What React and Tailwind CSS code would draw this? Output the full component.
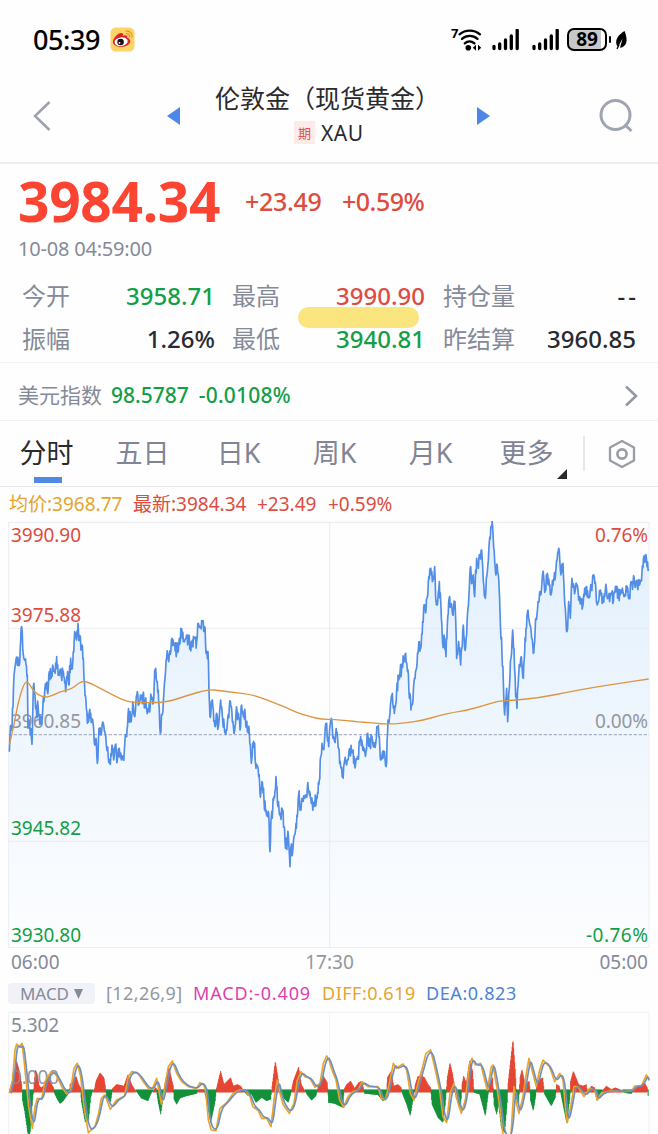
import React from "react";

const shift = (dx, dy, text) =>
  text.split(" ").map((p) => {
    const [x, y] = p.split(",").map(Number);
    return [x + dx, y + dy];
  });

const price = [
  ...shift(0, 1545, "28,710 30,660 36,640 42,480 48,435 58,450 62,380 65,335 70,420 78,450 82,480 84,640 88,625 96,688 100,515 105,540 110,600 114,570 118,600 124,628 130,545 138,510 142,530 148,470 153,490 158,450 164,470 170,425 176,480 184,485 190,470 197,530 203,470 206,510 212,430 217,460 224,350 230,375 234,325 238,375 246,390 250,430 252,490 258,560 262,625 268,590 275,610 284,690 288,670 292,745 297,640 302,660 310,625 316,660 320,700 331,748 336,690 341,735 346,690 352,735 358,700 364,735 370,735 376,660 380,665 384,600 392,615 400,575 406,590 412,530 418,565 426,540 436,565 446,590 454,545 460,565 463,500 467,460 472,500 476,560 481,655 486,600 490,560 495,490 500,430 508,415 516,370 524,385 530,415 538,370 544,360 550,380 558,370 566,380 574,390 582,370 590,380 595,325 600,335"),
  ...shift(600, 1830, "2,50 14,50 18,130 24,125 28,270 30,320 34,275 40,300 46,350 50,310 55,350 62,270 68,330 76,370 82,340 88,290 94,290 102,370 108,310 114,310 120,360 125,285 130,320 136,320 142,365 148,370 154,460 158,400 164,400 168,475 176,500 180,550 186,515 192,570 198,600 206,610 210,725 214,620 218,600 222,560 228,500 234,590 240,610 248,600 252,650 258,710 262,690 265,675 270,770 273,710 277,735 282,680 288,640 292,620 296,555 303,600 308,570 316,555 322,535 328,555 334,580 343,585 350,560 354,550 358,510 362,440 366,400 370,415 376,350 380,340 386,410 391,340 397,355 402,385 410,370 416,415 422,470 428,495 434,450 440,465 450,425 458,425 464,465 474,445 482,380 490,410 498,425 503,370 509,410 516,380 524,410 532,355 538,380 542,450 552,430 560,455 564,330 570,310 577,250 583,310 590,240 597,200 605,175 617,130 624,180 628,265 636,285 642,215 648,180 654,130"),
  ...shift(1140, 1545, "118,380 122,400 128,320 134,270 138,285 145,200 151,160 157,200 164,155 168,260 172,270 178,200 184,310 188,385 192,360 198,425 202,330 206,260 212,270 218,300 225,260 230,430 236,380 242,450 250,330 254,400 260,360 264,280 268,220 272,155 276,200 280,180 284,245 290,130 295,160 300,130 305,105 310,200 316,250 322,170 328,80 335,38 338,38 344,140 348,180 352,155 356,190 360,290 366,420 370,500 374,600 380,520 383,620 388,520 393,430 398,345 402,400 407,545 411,580 416,480 424,425 430,490 434,410 438,340 444,285 450,330 455,370 460,415 464,380 468,310 474,260 482,240 488,175 496,220 502,175 508,210 514,235 522,190 528,160 533,115 538,110 543,180 549,145 552,210 556,280 561,350 566,260 571,310 576,190 582,215 590,210 596,255 602,250 608,275 614,220 620,215 626,245 634,210 643,185 648,230 652,270 660,235 668,260 676,225 684,245 692,235 700,260 708,230 716,240 724,225 732,245 740,230 748,240 756,200 764,205 772,215 780,205 786,170 796,120 801,155 806,162"),
];

const average = [
  ...shift(0, 1545, "28,690 40,640 55,560 72,505 85,500 100,530 130,548 155,543 180,530 215,522 235,505 250,498 270,504 320,530 380,561 430,563 500,562 560,542"),
  ...shift(600, 1830, "25,238 60,242 100,247 150,253 180,262 220,278 260,293 290,308 330,320 365,328 400,328 480,336 530,340"),
  ...shift(1140, 1545, "0,626 40,627 80,623 125,617 180,601 220,592 260,586 310,572 355,558 400,556 480,548 560,532 640,517 720,505 806,492"),
];

const diff = [
  ...shift(0, 2700, "28,580 38,540 45,450 50,432 58,440 66,430 72,480 78,540 86,620 97,685 105,620 112,595 125,598 135,545 150,520 160,515 172,530 185,560 200,582 212,570 222,505 232,490 242,530 252,620 265,698 285,680 296,640 304,595 315,585 331,628 350,600 374,588 385,530 395,515 412,518 430,545 445,565 458,565 470,535 484,612 492,575 505,500 517,483 530,520 545,545 565,560 590,565 600,548 612,555 618,580 625,660 634,690 648,692 660,625 680,608 700,580 718,570 735,570 750,590 758,620 775,632 785,655 800,655 813,680 822,600 832,540 840,580 850,615 868,640 882,610 892,540 903,515 915,530 930,535 945,562 960,550 970,490 980,468"),
  ...shift(984, 2700, "4,482 12,510 24,540 35,600 47,622 60,590 75,575 90,570 102,545 120,560 150,560 160,595 172,600 182,560 196,490 205,505 225,492 236,510 247,580 258,600 270,550 284,500 294,460 308,450 320,500 335,570 345,650 356,668 366,580 378,550 390,610 400,640 412,600 425,490 432,475 442,495 458,490 470,540 478,570 490,500 495,495 508,570 518,640 525,705 548,720 558,560 565,610 573,640 585,590 595,520 603,475 612,510 625,560 635,510 645,480 665,500 680,545 695,520 705,540 712,620 718,668 728,620 738,560 750,560 768,590 785,565 800,570 808,600 820,580 850,572 890,575 912,572 920,558 940,558 955,525 963,540"),
];

// x, height above the zero line
const histogram = [
  ...shift(0, 0, "28,0 40,40 50,90 58,60 66,15 68,-30 74,-60 84,-130 90,-130 96,-50 100,-5 103,30 106,65 112,50 118,15 124,10 135,20 145,50 155,20 162,8 164,-8 172,-25 180,-38 190,-30 200,-15 208,-5 210,20 220,30 228,45 236,20 242,10 244,-30 256,-95 266,-85 272,-20 276,-5 284,8 288,30 300,55 312,40 316,15 320,-20 332,-32 338,8 350,20 360,18 372,15 384,50 395,20 404,5 412,-5 424,-22 444,-30 452,-10 462,5 468,12 474,-30 482,-70 488,-30 494,20 506,75 514,40 520,15 522,-25 530,-40 540,-22 560,-15 590,-8 596,5 612,5 620,-30 632,-95 645,-35 650,10 662,60 672,20 682,30 692,40 700,15 712,20 722,15 730,2 735,-5 745,-15 755,-10 768,-35 785,-20 800,-30 812,-25 817,20 826,90 834,40 840,-5 850,-20 865,-35 872,-10 880,30 896,72 904,20 912,5 922,-12 935,-28 948,-15 955,15 970,45 982,25"),
  ...shift(984, 0, "2,-35 20,-38 45,-50 48,5 56,20 68,30 80,8 92,25 100,30 105,15 110,-8 130,-10 150,-12 165,-30 176,-20 178,40 190,60 197,15 210,20 220,10 224,-10 236,-40 247,-75 256,-20 262,20 270,45 282,45 290,40 300,20 308,10 312,-40 330,-80 345,-95 352,-40 358,40 366,85 374,50 380,10 384,-20 398,-50 402,20 407,45 415,25 425,90 434,60 438,-5 455,-10 463,-40 472,-75 480,-15 484,20 494,40 498,-40 506,-70 512,-40 520,-110 530,-125 538,-30 540,20 550,110 555,155 562,60 566,-25 572,-40 576,40 582,65 592,20 604,30 608,-30 616,-60 624,-10 626,30 644,40 650,-10 670,-45 682,-20 686,20 694,15 700,-15 716,-95 726,-20 728,30 736,60 744,40 752,20 765,15 775,20 778,-10 790,15 800,10 806,-28 815,-10 835,15 850,5 862,10 880,3 890,-6 910,-8 925,10 950,25 958,10 961,-20"),
];

// small tick noise between the stored points, always the same
function withTicks(points, amount) {
  let seed = 11;
  const rand = () => {
    seed = (seed * 16807) % 2147483647;
    return seed / 2147483647 - 0.5;
  };
  const out = [];
  points.forEach(([x, y], i) => {
    out.push([x, y]);
    const next = points[i + 1];
    if (!next) return;
    const steps = Math.max(1, Math.round((next[0] - x) / 1.5));
    for (let s = 1; s < steps; s++) {
      const t = s / steps;
      out.push([x + (next[0] - x) * t, y + (next[1] - y) * t + rand() * amount]);
    }
  });
  return out;
}

const toPath = (points) => "M" + points.map(([x, y]) => `${x.toFixed(1)} ${y.toFixed(1)}`).join("L");

function smoothPath(points) {
  let d = `M${points[0][0]} ${points[0][1]}`;
  for (let i = 1; i < points.length - 1; i++) {
    const [x, y] = points[i];
    const [nx, ny] = points[i + 1];
    d += `Q${x} ${y} ${(x + nx) / 2} ${(y + ny) / 2}`;
  }
  const last = points[points.length - 1];
  return d + `L${last[0]} ${last[1]}`;
}

const ZERO = 3273;

function barPath(positive) {
  let d = "";
  for (let x = 29; x < 1946; x += 1.5) {
    const i = histogram.findIndex((p) => p[0] > x);
    if (i < 1) continue;
    const [x0, h0] = histogram[i - 1];
    const [x1, h1] = histogram[i];
    const h = h0 + ((h1 - h0) * (x - x0)) / (x1 - x0);
    if (h > 0 === positive) d += `M${x} ${positive ? ZERO + 4 : ZERO - 4}V${(ZERO - h).toFixed(1)}`;
  }
  return d;
}

const pricePath = toPath(withTicks(price, 46));
const dea = diff.map(([x, y]) => [Math.min(x + 5, 1947), ZERO + (y - ZERO) * 0.97]);

const quotes = [
  ["今开", "3958.71", "text-[#129f46]", "最高", "3990.90", "text-[#dc4d40]", "持仓量", "--", "text-[#292a2e] tracking-[3px] -mr-[3px]"],
  ["振幅", "1.26%", "text-[#292a2e]", "最低", "3940.81", "text-[#129f46]", "昨结算", "3960.85", "text-[#292a2e]"],
];

const tabs = ["分时", "五日", "日K", "周K", "月K", "更多"];

function WeiboIcon() {
  return (
    <svg width="25" height="25" viewBox="0 0 26 26">
      <rect x="0.5" y="0.5" width="25" height="25" rx="5.5" fill="#fcd567" />
      <path d="M3 15.5C3 11.5 8.5 6 12 6.3c1.6.2 1.8 1.5 1.4 2.8 2.3-1 5.2-.8 4.4 2 2.2.6 3.7 2 3.2 4.3-.7 3.3-4.600 5.200-9.100 5.200C7 20.600 3 18.600 3 15.500z" fill="#e0232a" />
      <ellipse cx="11.600" cy="15.300" rx="6.900" ry="4.500" fill="#fff" transform="rotate(-8 11.600 15.300)" />
      <circle cx="11" cy="15.600" r="3.400" fill="#15100f" />
      <circle cx="9.900" cy="16.500" r="1" fill="#fff" />
      <path d="M17.300 7c1.800-.3 3.500 1.200 3 3.200M16.800 4.200c3.600-.6 6.900 2.300 6.200 6.400" fill="none" stroke="#f29a26" strokeWidth="1.500" strokeLinecap="round" />
    </svg>
  );
}

function WifiIcon() {
  return (
    <svg width="32" height="28" viewBox="0 -2 32 28" className="overflow-visible">
      <text x="-1" y="9.500" fontSize="13" fontWeight="700" fill="#000">7</text>
      <g fill="none" stroke="#000" strokeWidth="2.300" strokeLinecap="round">
        <path d="M7.500 6.300C13.500 1.300 22 1.300 28 6.300" />
        <path d="M10 10.900c4.500-4 11-4 15.500 0" />
        <path d="M12.800 15.400c2.900-2.600 6.700-2.600 9.600 0" />
      </g>
      <circle cx="16.300" cy="19.700" r="2.800" fill="#000" />
      <path d="M24 16.700v6l-3.200-3zM26 16.700v6l3.200-3z" fill="#000" />
    </svg>
  );
}

function SignalIcon() {
  return (
    <svg width="28" height="22" viewBox="0 0 28 22">
      <path d="M2 17.500v2M7.700 15v4.500M13.500 11v8.500M19.300 7v12.500M25.200 1.200v18.300" stroke="#000" strokeWidth="3.300" strokeLinecap="round" />
    </svg>
  );
}

function StatusBar() {
  return (
    <div className="flex h-[79px] items-center pl-[33px] pr-[30px] text-black">
      <span className="w-[69px] text-[27px] font-medium leading-none tracking-[-0.400px]">05:39</span>
      <div className="ml-2"><WeiboIcon /></div>
      <div className="ml-auto flex items-center">
        <WifiIcon />
        <div className="ml-[8px]"><SignalIcon /></div>
        <div className="ml-3"><SignalIcon /></div>
        <div className="ml-[7px] flex h-[23px] w-10 items-center justify-center rounded-[7px] border-2 border-black bg-gradient-to-r from-[#c8c8c8] from-89% to-white to-90% text-[19px] font-bold leading-none">
          89
        </div>
        <div className="ml-[2px] h-[7px] w-[2px] rounded-full bg-black" />
        <svg className="ml-1" width="13" height="20" viewBox="0 0 13 20">
          <path d="M9.500 1C4 4.500 1 8 1.200 12.800c.1 1.900.9 3.200 1.800 4.200L7.600 8.500 5 17.800c4.500-.5 6.500-4 6.600-7.800C11.600 6.500 10.600 3.500 9.500 1z" fill="#000" />
          <path d="M2 19l2.200-4.500" stroke="#000" strokeWidth="1.300" />
        </svg>
      </div>
    </div>
  );
}

function Header() {
  return (
    <div className="flex h-[85px] items-center border-b-2 border-[#eeeeee] pl-[33px] pb-[11px] pt-[1px]">
      <svg width="18" height="32" viewBox="0 0 18 32">
        <path d="M16.500 2L2 16l14.500 14" fill="none" stroke="#9da2b0" strokeWidth="2.500" />
      </svg>
      <svg className="ml-[115px]" width="14" height="20" viewBox="0 0 14 20"><path d="M14 1v18L1 10z" fill="#4d88e8" /></svg>
      <div className="ml-[35px] w-[226px] text-[#292a2e]">
        <div className="text-[25px] leading-[34px] whitespace-nowrap">伦敦金（现货黄金）</div>
        <div className="flex items-center gap-[6px] pl-[79px] text-[21px] leading-[36px]">
          <span className="flex h-[23px] w-[21px] items-center justify-center bg-[#fdebe9] text-[13px] text-[#dc5549]">期</span>
          <span className="tracking-[0.500px]">XAU</span>
        </div>
      </div>
      <svg className="ml-[36px]" width="14" height="20" viewBox="0 0 14 20"><path d="M0 1v18l13-9z" fill="#4d88e8" /></svg>
      <svg className="ml-[108px]" width="36" height="36" viewBox="0 0 36 36" fill="none" stroke="#a0a5b3" strokeWidth="3">
        <circle cx="16.500" cy="17" r="14.500" />
        <path d="M25.500 26.500l7 6.500" />
      </svg>
    </div>
  );
}

function Quote() {
  return (
    <div className="h-[199px] border-b border-[#f3f3f3] pt-[8px]">
      <div className="flex h-[60px] items-center pl-[18px] text-[25px] text-[#dc4d40] font-medium">
        <span className="w-[227px] pb-[4px] text-[55px] font-bold leading-none text-[#fb4432] tracking-[-0.300px]">3984.34</span>
        <span className="w-[97px] tracking-[-0.300px]">+23.49</span>
        <span className="tracking-[-0.500px]">+0.59%</span>
      </div>
      <div className="flex h-[34px] items-center pl-[18px] text-[20px] leading-none tracking-[-0.200px] text-[#858a99]">10-08 04:59:00</div>
      <div className="relative">
        <div className="absolute left-[298px] top-[41px] h-[21px] w-[121px] rounded-full bg-[#fbe57f]" />
        <div className="relative pt-[8px]">
          {quotes.map((q) => (
            <div key={q[0]} className="grid h-[43px] grid-cols-[210px_211px_193px] items-center pl-[22px] text-[24px] text-[#858a99]">
              {[0, 3, 6].map((i) => (
                <div key={i} className={i === 0 ? "flex justify-between pr-[17px]" : i === 3 ? "flex justify-between pr-[18px]" : "flex justify-between"}>
                  <span>{q[i]}</span>
                  <span className={`font-medium ${q[i + 2]}`}>{q[i + 1]}</span>
                </div>
              ))}
            </div>
          ))}
        </div>
      </div>
    </div>
  );
}

function DollarIndex() {
  return (
    <div className="flex h-[58px] items-center border-b border-[#f1f1f1] pl-[18px] pr-[20px] pt-2 text-[21px] text-[#858a99]">
      <span>美元指数</span>
      <span className="ml-[9px] font-medium text-[#129f46]">98.5787</span>
      <span className="ml-[10px] font-medium tracking-[0.200px] text-[#129f46]">-0.0108%</span>
      <svg className="ml-auto" width="14" height="22" viewBox="0 0 14 22">
        <path d="M2 1.500L12 11 2 20.500" fill="none" stroke="#9297a3" strokeWidth="2.500" />
      </svg>
    </div>
  );
}

function Tabs() {
  return (
    <div className="flex h-[66px] items-center border-b border-[#e9e9eb] text-[27px] text-[#7f8595]">
      {tabs.map((tab, i) => (
        <div key={tab} className={`relative flex h-full w-24 items-center justify-center pr-[3px] ${i === 0 ? "text-[#292a2e]" : ""}`}>
          {tab}
          {i === 0 && <div className="absolute bottom-[3px] left-[34px] h-[6px] w-[28px] bg-[#5289e2]" />}
          {i === 5 && (
            <svg className="absolute bottom-[7px] right-[9px]" width="10" height="10" viewBox="0 0 10 10"><path d="M10 0v10H0z" fill="#292a2e" /></svg>
          )}
        </div>
      ))}
      <div className="ml-[7px] h-[35px] w-[2px] bg-[#e6e7ea]" />
      <svg className="ml-[23px]" width="28" height="30" viewBox="0 0 28 30" fill="none" stroke="#989da9" strokeWidth="2.300">
        <path d="M14 2l12 6.500v13L14 28 2 21.500v-13z" strokeLinejoin="round" />
        <circle cx="14" cy="15" r="4.600" strokeWidth="2.700" />
      </svg>
    </div>
  );
}

function PriceChart() {
  return (
    <svg className="block" width="658" height="427" viewBox="0 521 658 427" fontSize="19">
      <defs>
        <linearGradient id="priceFill" gradientUnits="userSpaceOnUse" x1="0" y1="1580" x2="0" y2="2844">
          <stop offset="0" stopColor="#dcedfd" />
          <stop offset="0.450" stopColor="#ebf4fd" />
          <stop offset="1" stopColor="#fcfdff" />
        </linearGradient>
      </defs>
      <g transform="scale(0.33333)">
        <path d={`${pricePath}V2844H28Z`} fill="url(#priceFill)" fillOpacity="0.850" />
        <path d="M26 1567H1947V2843H26ZM26 1885H1947M26 2524H1947M989 1567V2843" fill="none" stroke="#dfe6ed" strokeWidth="3" strokeOpacity="0.700" />
        <path d="M26 2204H1947" stroke="#adb3c6" strokeWidth="3.500" strokeDasharray="10 5" />
      </g>
      <text x="11" y="728" textLength="70" fill="#94979f">3960.85</text>
      <g transform="scale(0.33333)" fill="none" strokeLinejoin="round">
        <path d={pricePath} stroke="#528ee6" strokeWidth="5" />
        <path d={smoothPath(average)} stroke="#dc9642" strokeWidth="4" />
      </g>
      <text x="11" y="541.500" textLength="70" fill="#dc4d40">3990.90</text>
      <text x="11" y="622" textLength="70" fill="#dc4d40">3975.88</text>
      <text x="11" y="834.500" textLength="70" fill="#129f46">3945.82</text>
      <text x="11" y="941.500" textLength="70" fill="#129f46">3930.80</text>
      <text x="595" y="541.500" textLength="53" fill="#dc4d40">0.76%</text>
      <text x="595" y="728" textLength="53" fill="#94979f">0.00%</text>
      <text x="586" y="941.500" textLength="62" fill="#129f46">-0.76%</text>
    </svg>
  );
}

function MacdChart() {
  return (
    <svg className="block" width="658" height="123" viewBox="0 1011 658 123" fontSize="19">
      <text x="11" y="1031.500" textLength="48" fill="#858a99">5.302</text>
      <g transform="scale(0.33333)" fill="none" strokeLinejoin="round">
        <path d="M26 3410V3037H1947V3410M989 3037V3410" stroke="#edf0f3" strokeWidth="3" />
        <path d={barPath(true)} stroke="#e5402f" strokeWidth="3" />
        <path d={barPath(false)} stroke="#0d8f35" strokeWidth="3" />
      </g>
      <text x="11" y="1084" textLength="48" fill="#858a99" fillOpacity="0.900">0.000</text>
      <g transform="scale(0.33333)" fill="none" strokeLinejoin="round">
        <path d={toPath(diff)} stroke="#eba32b" strokeWidth="5" />
        <path d={smoothPath(dea)} stroke="#6e90ba" strokeWidth="5" />
      </g>
    </svg>
  );
}

export default function App() {
  return (
    <div className="h-[1134px] w-[658px] overflow-hidden bg-[#fefefe] font-['Noto_Sans','Noto_Sans_CJK_SC',sans-serif]">
      <StatusBar />
      <Header />
      <Quote />
      <DollarIndex />
      <Tabs />
      <div className="flex h-[34px] items-center whitespace-nowrap pl-[9px] text-[19px] text-[#dc4d40]">
        <span className="w-[124px] text-[#e5a42c]">均价:3968.77</span>
        <span className="w-[124px]">最新:3984.34</span>
        <span className="w-[71px]">+23.49</span>
        <span>+0.59%</span>
      </div>
      <PriceChart />
      <div className="flex h-[28px] items-center justify-between pl-[11px] pr-[10px] text-[19px] text-[#858a99]">
        <span>06:00</span>
        <span className="text-[#94979f]">17:30</span>
        <span>05:00</span>
      </div>
      <div className="flex h-[35px] items-center whitespace-nowrap pl-2 text-[18px]">
        <div className="flex h-[21px] w-[87px] items-center justify-center gap-[5px] rounded-sm bg-[#f0f2f8] text-[17px] text-[#858a99]">
          MACD
          <svg width="9" height="10" viewBox="0 0 9 10"><path d="M0 0h9L4.500 10z" fill="#858a99" /></svg>
        </div>
        <span className="ml-[11px] w-[87px] tracking-[0.400px] text-[#94979f]">[12,26,9]</span>
        <span className="w-[129px] tracking-[0.850px] text-[#df3fb0]">MACD:-0.409</span>
        <span className="w-[104px] tracking-[0.500px] text-[#e5a42c]">DIFF:0.619</span>
        <span className="tracking-[0.600px] text-[#4c84d6]">DEA:0.823</span>
      </div>
      <MacdChart />
    </div>
  );
}
